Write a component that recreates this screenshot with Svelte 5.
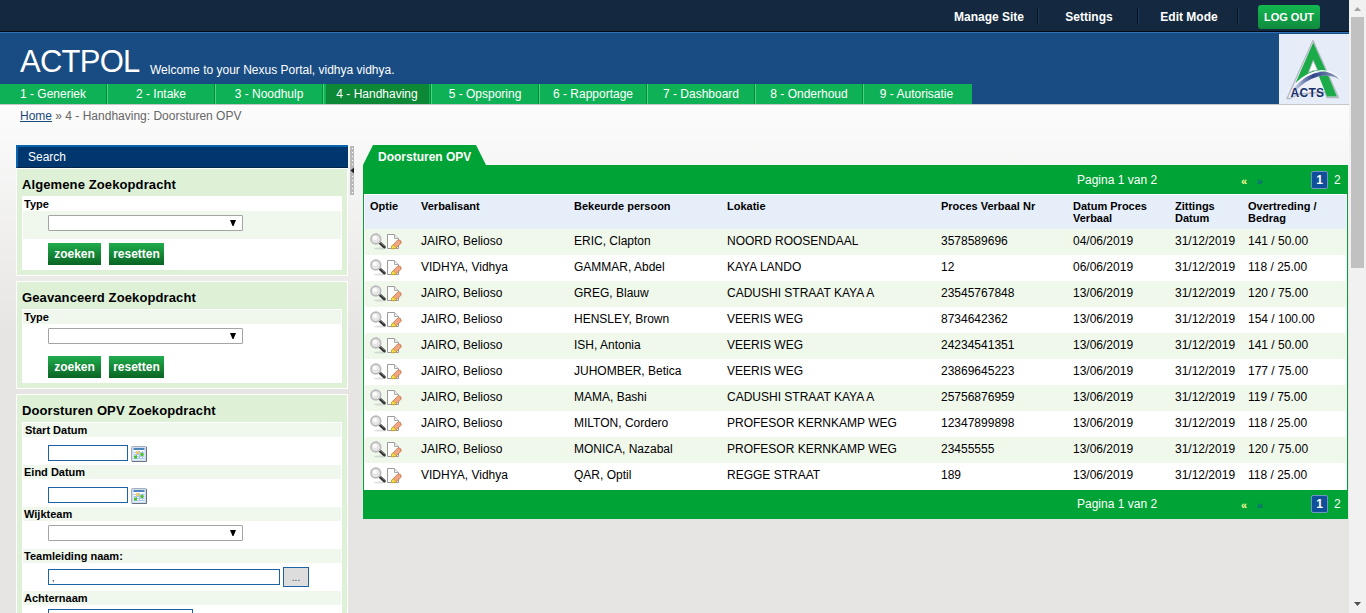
<script>
  const menu = ['Manage Site', 'Settings', 'Edit Mode'];
  const nav = ['1 - Generiek', '2 - Intake', '3 - Noodhulp', '4 - Handhaving', '5 - Opsporing', '6 - Rapportage', '7 - Dashboard', '8 - Onderhoud', '9 - Autorisatie'];
  const searches = ['Algemene Zoekopdracht', 'Geavanceerd Zoekopdracht'];
  const fields = [
    { label: 'Start Datum', kind: 'date' },
    { label: 'Eind Datum', kind: 'date' },
    { label: 'Wijkteam', kind: 'choice' },
    { label: 'Teamleiding naam:', kind: 'lookup' },
    { label: 'Achternaam', kind: 'text' }
  ];
  const heads = ['Optie', 'Verbalisant', 'Bekeurde persoon', 'Lokatie', 'Proces Verbaal Nr', 'Datum Proces Verbaal', 'Zittings Datum', 'Overtreding / Bedrag'];
  const rows = [
    ['JAIRO, Belioso', 'ERIC, Clapton', 'NOORD ROOSENDAAL', '3578589696', '04/06/2019', '31/12/2019', '141 / 50.00'],
    ['VIDHYA, Vidhya', 'GAMMAR, Abdel', 'KAYA LANDO', '12', '06/06/2019', '31/12/2019', '118 / 25.00'],
    ['JAIRO, Belioso', 'GREG, Blauw', 'CADUSHI STRAAT KAYA A', '23545767848', '13/06/2019', '31/12/2019', '120 / 75.00'],
    ['JAIRO, Belioso', 'HENSLEY, Brown', 'VEERIS WEG', '8734642362', '13/06/2019', '31/12/2019', '154 / 100.00'],
    ['JAIRO, Belioso', 'ISH, Antonia', 'VEERIS WEG', '24234541351', '13/06/2019', '31/12/2019', '141 / 50.00'],
    ['JAIRO, Belioso', 'JUHOMBER, Betica', 'VEERIS WEG', '23869645223', '13/06/2019', '31/12/2019', '177 / 75.00'],
    ['JAIRO, Belioso', 'MAMA, Bashi', 'CADUSHI STRAAT KAYA A', '25756876959', '13/06/2019', '31/12/2019', '119 / 75.00'],
    ['JAIRO, Belioso', 'MILTON, Cordero', 'PROFESOR KERNKAMP WEG', '12347899898', '13/06/2019', '31/12/2019', '118 / 25.00'],
    ['JAIRO, Belioso', 'MONICA, Nazabal', 'PROFESOR KERNKAMP WEG', '23455555', '13/06/2019', '31/12/2019', '120 / 75.00'],
    ['VIDHYA, Vidhya', 'QAR, Optil', 'REGGE STRAAT', '189', '13/06/2019', '31/12/2019', '118 / 25.00']
  ];
</script>

{#snippet select()}
  <div class="select"><svg width="8" height="7" viewBox="0 0 8 7"><path d="M1 0h6L4.500 6h-1z" fill="#000" /></svg></div>
{/snippet}

{#snippet pager(bottom)}
  <div class="pager" class:bottom>
    <span class="pages">Pagina 1 van 2</span>
    <span class="prev">«</span><span class="next">»</span>
    <span class="current">1</span><span class="other">2</span>
  </div>
{/snippet}

<div class="window">
  <div class="page">
    <div class="topbar">
      {#each menu as item}<span class="menu">{item}</span>{/each}
      <span class="logout">LOG OUT</span>
    </div>
    <header>
      <div class="brandrow">
        <h1>ACTPOL</h1>
        <span class="welcome">Welcome to your Nexus Portal, vidhya vidhya.</span>
      </div>
      <nav>
        {#each nav as item, i}<span class="item" class:first={i === 0} class:active={i === 3}><b>{item}</b></span>{/each}
      </nav>
      <svg class="logo" width="70" height="70" viewBox="0 0 70 70">
        <defs>
          <linearGradient id="swoosh"><stop offset="0" stop-color="#c9d2e6" /><stop offset=".4" stop-color="#2f4489" /><stop offset=".75" stop-color="#6d80ad" /><stop offset="1" stop-color="#c3cbd8" /></linearGradient>
        </defs>
        <rect width="70" height="70" fill="#e6edf9" />
        <path d="M34 6.500L59.500 63.500H48L46 58L20 60L11 64.500H8z" fill="#eef2f8" stroke="#b3b8c4" stroke-width="1.300" stroke-linejoin="round" />
        <path d="M34.200 8.500L47.500 38Q31 34 16.500 49z" fill="#1bac49" />
        <path d="M34.200 26.500L38.500 36Q34 36 29.500 38.500z" fill="#fff" stroke="#aeb5c5" stroke-width=".8" />
        <path d="M39 40L48 62.500H58L48.500 40z" fill="#1bac49" />
        <path d="M12 60Q22 42 42 38Q55 38 63 46.500Q51 39.500 41 42Q28 46 20 56z" fill="#e6edf9" />
        <path d="M15 54Q26 40 43 37.500Q55 38 63 46.500Q50 39.500 39 42.500Q27 46 17 56z" fill="url(#swoosh)" />
        <path d="M18 49.500Q30 37 43 36.500Q54 37 62 45.500" fill="none" stroke="#fff" stroke-width="1.100" />
        <text x="11.500" y="63" textLength="33.500" font-size="12" font-weight="bold" fill="#18316c">ACTS</text>
      </svg>
    </header>

    <div class="crumbs"><u>Home</u> » 4 - Handhaving: Doorsturen OPV</div>

    <main>
      <aside>
        <div class="search">Search</div>
        {#each searches as title, i}
          <section class="panel" class:alt={i === 1}>
            <h2>{title}</h2>
            <div class="box">
              <div class="label">Type</div>
              <div class="control">{@render select()}</div>
              <div class="buttons"><span class="btn go">zoeken</span><span class="btn">resetten</span></div>
            </div>
          </section>
        {/each}
        <section class="panel alt last">
          <h2>Doorsturen OPV Zoekopdracht</h2>
          <div class="box">
            {#each fields as f, i}
              <div class="label" class:nudge={i === 0}>{f.label}</div>
              <div class="control {f.kind}">
                {#if f.kind === 'choice'}
                  {@render select()}
                {:else if f.kind === 'date'}
                  <div class="input"></div>
                  <svg class="cal" width="16" height="16" viewBox="0 0 16 16">
                    <rect x=".5" y=".5" width="15" height="15" rx="1" fill="#cfdff2" stroke="#a4adb9" />
                    <path d="M1 15.500H15.500V1" fill="none" stroke="#68717c" />
                    <rect x="2.500" y="2" width="11" height="11.500" fill="#fff" />
                    <rect x="2.500" y="2" width="11" height="2" fill="#4f84bf" />
                    <path d="M2.500 6.500H13.500M2.500 8.500H13.500M2.500 10.500H13.500M2.500 12.500H13.500M5.500 5V13M8.500 5V13M11.500 5V13" stroke="#a9c6e8" />
                    <rect x="5" y="5" width="3" height="3" fill="#f2cc62" />
                    <rect x="9.500" y="7" width="3" height="3" fill="#4bc32b" />
                    <rect x="3" y="9.500" width="3" height="3" fill="#4bc32b" />
                  </svg>
                {:else if f.kind === 'lookup'}
                  <div class="input wide">,</div><span class="dots">...</span>
                {:else}
                  <div class="input mid"></div>
                {/if}
              </div>
            {/each}
          </div>
        </section>
      </aside>

      <div class="splitter">
        <svg width="4" height="49" viewBox="0 0 4 49">
          <rect width="4" height="49" fill="#b9b9b9" />
          <path d="M2.500 2V48" stroke="#fff" stroke-width="1" stroke-dasharray="1 3" />
          <rect y="20" width="4" height="9" fill="#b9b9b9" />
          <path d="M4 21.500V27.500L.5 24.500z" fill="#222" />
        </svg>
      </div>

      <div class="content">
        <div class="tab">Doorsturen OPV</div>
        {@render pager(false)}
        <div class="table">
          <div class="row head">{#each heads as h}<span>{h}</span>{/each}</div>
          {#each rows as r}
            <div class="row">
              <span class="icons">
                <svg width="32" height="17" viewBox="0 0 32 17">
                  <ellipse cx="10" cy="15.500" rx="6" ry="1" fill="#000" opacity=".13" />
                  <path d="M9.500 9.500L14.300 14" stroke="#333" stroke-width="3" stroke-linecap="round" />
                  <path d="M10 9L14.500 13" stroke="#999" stroke-width=".8" />
                  <circle cx="5.800" cy="6" r="4.900" fill="#e6e6e6" stroke="#b9b9b9" stroke-width="1.600" />
                  <circle cx="5" cy="5" r="2" fill="#fff" />
                  <path d="M17.500 1.500H24.500L28.500 5.500V15.500H17.500z" fill="#fff" stroke="#9b9b9b" />
                  <path d="M24.500 1.500V5.500H28.500" fill="#eee" stroke="#aaa" />
                  <path d="M22 13L28 6.700Q31.300 6.700 31.300 10L25.500 15.500z" fill="#f0a680" stroke="#c0714c" stroke-width=".8" />
                  <path d="M21.500 15.700V13L23.500 11.800L26 14.500L25 15.700z" fill="#f2dc4b" stroke="#ba951e" stroke-width=".7" />
                </svg>
              </span>
              {#each r as c}<span>{c}</span>{/each}
            </div>
          {/each}
        </div>
        {@render pager(true)}
      </div>
    </main>
  </div>

  <div class="scrollbar">
    <svg width="17" height="17"><path d="M5 11L8.500 7L12 11z" fill="#a3a3a3" /></svg>
    <div class="thumb"></div>
    <svg width="17" height="17"><path d="M5 6H12L8.500 10z" fill="#505050" /></svg>
  </div>
</div>

<style>
  :global(body) { margin: 0; overflow: hidden; }
  .window { display: flex; width: 1366px; height: 613px; overflow: hidden; font: 12px/14px "Liberation Sans", Arial, sans-serif; color: #000; }
  .window :global(*) { box-sizing: border-box; }
  .page { width: 1349px; height: 613px; overflow: hidden; background: linear-gradient(#fcfcfc 105px, #e6e5e3 335px); }
  .topbar { height: 33px; display: flex; justify-content: flex-end; align-items: flex-start; padding: 5px 29px 0 0; background: #14293f; border-bottom: 1px solid #2f72b8; box-shadow: inset 0 -1px #030a14; }
  .menu { width: 100px; height: 22px; margin-top: 2px; padding-top: 3px; text-align: center; color: #fff; font-weight: bold; line-height: 14px; background: linear-gradient(90deg, #07131f 1px, #1b395a 1px) right 1px / 2px 16px no-repeat; }
  .logout { width: 62px; height: 24px; margin-left: 19px; border-radius: 3px; background: linear-gradient(#12b850, #108b3d); color: #fff; font-weight: bold; font-size: 11px; line-height: 25px; text-align: center; }
  header { position: relative; height: 72px; background: #184c82; border-bottom: 1px solid #c6c6c8; color: #fff; }
  .brandrow { height: 51px; display: flex; align-items: baseline; padding: 11px 0 0 20px; }
  h1 { margin: 0; font-size: 31px; line-height: 36px; font-weight: normal; width: 130px; letter-spacing: -.75px; }
  .welcome { line-height: 14px; position: relative; top: 2px; }
  nav { display: flex; height: 20px; }
  .item { width: 108px; display: flex; justify-content: center; background: #0fb157; border-left: 1px solid #43d982; border-right: 1px solid #078738; line-height: 20px; }
  .item.first { width: 107px; border-left: 0; }
  .item b { font-weight: normal; }
  .item.active { padding: 0 1px 0 2px; }
  .item:last-child { width: 109px; border-right: 0; padding-right: 3px; }
  .active b { flex: 1; text-align: center; background: #0c8837; padding-right: 1px; }
  .logo { position: absolute; right: 0; top: 1px; }
  .crumbs { padding: 4px 0 0 20px; height: 40px; color: #666; }
  .crumbs u { color: #1b4a7d; }
  main { display: flex; align-items: flex-start; padding-left: 16px; }
  aside { width: 332px; }
  .search { height: 23px; padding: 3px 0 0 10px; line-height: 14px; color: #fff; background: #00376f; border-top: 2px solid #0865ad; border-left: 2px solid #0865ad; border-bottom: 1px solid #00254d; }
  .panel { height: 108px; margin-bottom: 5px; border: 1px solid #fff; background: #def1d6; padding: 0 5px; }
  .panel h2 { margin: 0; height: 27px; padding-top: 8px; font-size: 13px; line-height: 15px; letter-spacing: .11px; }
  .last { height: 260px; }
  .box { background: #fff; border: 1px solid #fff; height: 74px; }
  .last .box { height: 240px; }
  .label { height: 14px; font-size: 11px; font-weight: bold; line-height: 14px; padding-left: 1px; }
  .nudge { padding-left: 2px; }
  .alt .label { background: #f0f8ee; }
  .control { height: 28px; padding: 4px 0 0 25px; background: #f0f8ee; display: flex; align-items: flex-start; }
  .alt .control { background: #fff; }
  .select { width: 195px; height: 16px; border: 1px solid #a4a4a4; border-radius: 1px; background: #fff; display: flex; justify-content: flex-end; padding: 4px 5px 0 0; }
  .buttons { display: flex; gap: 8px; padding: 4px 0 0 25px; }
  .btn { width: 55px; height: 22px; text-align: center; color: #fff; font-weight: bold; line-height: 22px; background: linear-gradient(#20ad4d, #0a6423); }
  .go { width: 53px; }
  .date { padding-top: 8px; }
  .lookup { padding-top: 4px; }
  .input { width: 80px; height: 16px; border: 1px solid #1d62a5; background: #fff; margin-right: 3px; }
  .cal { margin-top: 1px; }
  .wide { width: 232px; margin-top: 2px; font-size: 9px; line-height: 16px; padding-left: 3px; }
  .mid { width: 145px; }
  .dots { width: 26px; height: 20px; border: 1px solid #1d62a5; background: #ddd; font-size: 10px; line-height: 19px; text-align: center; color: #345; }
  .splitter { width: 15px; padding: 1px 0 0 2px; }
  .content { width: 985px; }
  .tab { width: 123px; height: 20px; background: #00a335; clip-path: polygon(10px 0, 113px 0, 100% 100%, 0 100%); color: #fff; font-weight: bold; padding: 5px 0 0 15px; line-height: 14px; }
  .pager { height: 29px; display: flex; align-items: center; padding-left: 714px; background: #00a335; color: #fff; }
  .bottom { padding-bottom: 2px; }
  .pages { width: 163px; }
  .prev { width: 16px; color: #ffff9c; font-weight: bold; font-size: 11px; padding-top: 2px; }
  .next { width: 54px; color: #17539c; font-size: 11px; padding-top: 2px; }
  .prev, .next { padding-left: 1px; }
  .current { width: 17px; height: 18px; margin-left: 1px; border: 1px solid #6f96c3; border-radius: 2px; background: #10509a; text-align: center; font-weight: bold; line-height: 16px; }
  .other { margin-left: 6px; }
  .table { background: #fff; border: solid #00a335; border-width: 0 1px; padding: 1px; }
  .row { height: 26px; display: grid; grid-template-columns: 51px 153px 153px 214px 132px 102px 73px 95px; padding: 5px 0 0 5px; }
  .row:nth-child(even) { background: #f0f8ec; }
  .row.head { height: 34px; font-size: 11px; font-weight: bold; line-height: 12px; background: #e6eefa; }
  .head span:nth-child(6) { padding-right: 25px; }
  .head span:nth-child(7) { padding-right: 40px; }
  .head span:nth-child(8) { padding-right: 20px; }
  .icons svg { display: block; margin-top: -1px; }
  .scrollbar { width: 17px; height: 613px; background: #f1f1f1; display: flex; flex-direction: column; }
  .scrollbar svg { display: block; flex: none; }
  .thumb { width: 13px; height: 251px; margin: 0 2px 328px; background: #c1c1c1; flex: none; }
</style>
